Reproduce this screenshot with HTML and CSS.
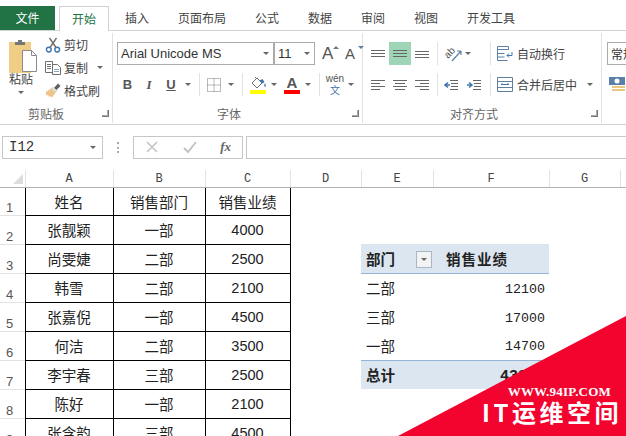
FILE: index.html
```html
<!DOCTYPE html>
<html lang="zh-CN">
<head>
  <meta charset="UTF-8">
  <title>销售业绩</title>
  <link rel="stylesheet" href="styles.css">
</head>
<body>
<div class="app">

  <!-- tabs -->
  <div class="tabs">
    <div class="tab tab-file">文件</div>
    <div class="tab tab-on">开始</div>
    <div class="tab">插入</div>
    <div class="tab">页面布局</div>
    <div class="tab">公式</div>
    <div class="tab">数据</div>
    <div class="tab">审阅</div>
    <div class="tab">视图</div>
    <div class="tab">开发工具</div>
  </div>

  <!-- ribbon -->
  <div class="ribbon">
    <div class="grp grp-clip">
      <div class="grp-body clip-body">
        <div class="paste">
          <svg class="paste-icon" width="29" height="34" viewBox="0 0 29 34">
            <rect x="0" y="3" width="22" height="31" fill="#f0cd84"/>
            <path d="M6 3h3V1h4v2h3v3H6z" fill="#757575"/>
            <path d="M13.500 11.500h9l5 5v16h-14z" fill="#fff" stroke="#8a8a8a"/>
            <path d="M22.500 11.500v5h5" fill="none" stroke="#8a8a8a"/>
          </svg>
          <span class="paste-txt">粘贴</span>
          <i class="caret"></i>
        </div>
        <div class="clip-list">
          <div class="clip-item">
            <svg width="16" height="16" viewBox="0 0 16 16" fill="none" stroke="#3f76ae" stroke-width="1.4">
              <circle cx="3.800" cy="12.600" r="2.400"/><circle cx="12.200" cy="12.600" r="2.400"/>
              <path d="M5 10.500L11.500 1M11 10.500L4.500 1" stroke="#6f6f6f"/>
            </svg>
            <span>剪切</span>
          </div>
          <div class="clip-item">
            <svg width="16" height="14" viewBox="0 0 16 14" fill="none" stroke="#6f6f6f">
              <path d="M.5.5h7v11h-7zM2 3.500h4M2 5.500h4M2 7.500h4"/>
              <path d="M7.500 3.500h5l3 3v7h-8z" fill="#fff"/>
              <path d="M9 8.500h5M9 10.500h5" stroke="#8aa4c0"/>
            </svg>
            <span>复制</span>
            <i class="caret caret-copy"></i>
          </div>
          <div class="clip-item">
            <svg width="16" height="15" viewBox="0 0 16 15">
              <path d="M9 5l4-4.500 2.500 2.500-4 4z" fill="#5f5f5f"/>
              <path d="M1 9l7-5 4 4-5 6.500-2-1.500-1 1-1-2-2 .5z" fill="#efc58b"/>
              <path d="M8 4l4 4-1.500 2-4-4z" fill="#dcdcdc"/>
            </svg>
            <span>格式刷</span>
          </div>
        </div>
      </div>
      <div class="grp-label"><span></span><span>剪贴板</span><i class="launcher"></i></div>
    </div>

    <div class="grp grp-font">
      <div class="grp-body">
        <div class="font-row1">
          <div class="combo combo-name"><span>Arial Unicode MS</span><i class="caret"></i></div>
          <div class="combo combo-size"><span>11</span><i class="caret"></i></div>
          <div class="grow-a">A<i class="tri-up"></i></div>
          <div class="grow-a shrink-a">A<i class="tri-down"></i></div>
        </div>
        <div class="font-row2">
          <b class="fmt">B</b>
          <i class="fmt fmt-i">I</i>
          <u class="fmt">U</u>
          <i class="caret"></i>
          <i class="sep"></i>
          <svg width="14" height="14" viewBox="0 0 14 14" fill="none" stroke="#777" stroke-dasharray="1 1"><path d="M.5.5h13v13H.5zM7 .5v13M.5 7h13"/></svg>
          <i class="caret"></i>
          <i class="sep"></i>
          <div class="color-btn">
            <svg width="17" height="14" viewBox="0 0 17 14" fill="none" stroke="#6f6f6f"><path d="M2 7l5-5 5 5-5 5z" fill="#fff"/><path d="M5 1l2 2"/><path d="M9.500 4.500l3 3 2-1.500-2-3z" fill="#3f76ae" stroke="none"/><path d="M15 7q1.500 3 0 4q-1.500-1 0-4z" fill="#3f76ae" stroke="none"/></svg>
            <i class="bar bar-y"></i>
          </div>
          <i class="caret"></i>
          <div class="color-btn"><span class="color-a">A</span><i class="bar bar-r"></i></div>
          <i class="caret"></i>
          <i class="sep"></i>
          <div class="wen"><span>wén</span><span class="wen-zi">文</span></div>
          <i class="caret"></i>
        </div>
      </div>
      <div class="grp-label"><span></span><span>字体</span><i class="launcher"></i></div>
    </div>

    <div class="grp grp-align">
      <div class="grp-body">
        <div class="align-row1">
          <svg class="lines" width="14" height="8" viewBox="0 0 14 8"><path d="M0 .5h14M0 3.500h14M0 6.500h14"/></svg>
          <div class="align-on"><svg class="lines" width="14" height="8" viewBox="0 0 14 8"><path d="M0 .5h14M0 3.500h14M0 6.500h14"/></svg></div>
          <svg class="lines line-low" width="14" height="8" viewBox="0 0 14 8"><path d="M0 .5h14M0 3.500h14M0 6.500h14"/></svg>
          <i class="sep"></i>
          <svg class="orient" width="18" height="16" viewBox="0 0 18 16" fill="none">
            <text x="1" y="10" transform="rotate(-45 6 8)" class="orient-txt">ab</text>
            <path d="M8 15L17 5M17 5h-4M17 5v4" stroke="#5b7fa6" stroke-width="1.200"/>
          </svg>
          <i class="caret"></i>
          <span></span>
          <i class="sep"></i>
          <svg width="16" height="15" viewBox="0 0 16 15" fill="none" stroke="#5b7fa6"><path d="M.5.5h11v3H.5zM.5 3.500v11h10M.5 7.500h7M.5 11h7"/><path d="M15 6v3.500H10M12 7.500l-2 2 2 2" stroke="#3f76ae"/></svg>
          <span class="align-txt">自动换行</span>
        </div>
        <div class="align-row2">
          <svg class="lines" width="14" height="10" viewBox="0 0 14 10"><path d="M0 .5h14M0 3.500h9M0 6.500h14M0 9.500h9"/></svg>
          <svg class="lines" width="14" height="10" viewBox="0 0 14 10"><path d="M0 .5h14M2 3.500h10M0 6.500h14M2 9.500h10"/></svg>
          <svg class="lines" width="14" height="10" viewBox="0 0 14 10"><path d="M0 .5h14M5 3.500h9M0 6.500h14M5 9.500h9"/></svg>
          <i class="sep"></i>
          <svg width="14" height="10" viewBox="0 0 14 10" fill="none" stroke="#666"><path d="M6 .5h8M7 3.500h7M7 6.500h7M6 9.500h8"/><path d="M6 5H1M4 2.500L1 5l3 2.500" stroke="#3f76ae" stroke-width="1.500"/></svg>
          <svg width="15" height="10" viewBox="0 0 15 10" fill="none" stroke="#666"><path d="M7 .5h8M8 3.500h7M8 6.500h7M7 9.500h8"/><path d="M1 5h5M3 2.500L6 5 3 7.500" stroke="#3f76ae" stroke-width="1.500"/></svg>
          <i class="sep"></i>
          <svg width="16" height="15" viewBox="0 0 16 15" fill="none" stroke="#5f7f9f"><path d="M.5.5h15v14H.5zM.5 4.500h15M.5 10.500h15"/><path d="M4 7.500h8M4 7.500l1.500-1M12 7.500l-1.500-1" stroke="#3f76ae"/></svg>
          <span class="align-txt">合并后居中</span>
          <i class="caret"></i>
        </div>
      </div>
      <div class="grp-label"><span></span><span>对齐方式</span><i class="launcher"></i></div>
    </div>

    <div class="grp grp-num">
      <div class="grp-body">
        <div class="combo combo-num"><span>常规</span></div>
        <svg class="num-icon" width="17" height="17" viewBox="0 0 17 17"><rect y="1" width="16" height="8" fill="#5b7fa6"/><circle cx="8" cy="5" r="2.500" fill="#fff"/><rect x="3" y="10" width="13" height="2" fill="#e8c77e"/><rect x="3" y="13" width="13" height="2" fill="#e8c77e"/></svg>
      </div>
    </div>
  </div>

  <!-- formula bar -->
  <div class="fbar">
    <div class="namebox"><span>I12</span><i class="caret"></i></div>
    <div class="fdots"><i></i></div>
    <div class="fbtns">
      <svg width="14" height="14" viewBox="0 0 14 14" fill="none" stroke="#c4c4c4" stroke-width="1.600"><path d="M2 2l10 10M12 2L2 12"/></svg>
      <svg width="14" height="14" viewBox="0 0 14 14" fill="none" stroke="#c4c4c4" stroke-width="2"><path d="M1 8l4 4 8-10"/></svg>
      <span class="fx">fx</span>
    </div>
    <div class="finput"></div>
  </div>

  <!-- sheet -->
  <div class="sheet">
    <table class="grid">
      <colgroup>
        <col class="c-head"><col class="c-a"><col class="c-b"><col class="c-c"><col class="c-d"><col class="c-e"><col class="c-f"><col class="c-g"><col>
      </colgroup>
      <tr class="col-heads">
        <th class="corner"><i class="corner-tri"></i></th><th>A</th><th>B</th><th>C</th><th>D</th><th>E</th><th>F</th><th>G</th><th></th>
      </tr>
      <tr class="row-first">
        <th class="rn">1</th><td class="d">姓名</td><td class="d">销售部门</td><td class="d">销售业绩</td>
        <td></td><td></td><td></td><td></td><td></td>
      </tr>
      <tr>
        <th class="rn">2</th><td class="d">张靓颖</td><td class="d">一部</td><td class="d">4000</td>
        <td></td><td></td><td></td><td></td><td></td>
      </tr>
      <tr>
        <th class="rn">3</th><td class="d">尚雯婕</td><td class="d">二部</td><td class="d">2500</td>
        <td></td><td class="pv-head"><div class="pv-filter"><span>部门</span><i class="filter-btn"><i class="caret"></i></i></div></td><td class="pv-head pv-title">销售业绩</td><td></td><td></td>
      </tr>
      <tr>
        <th class="rn">4</th><td class="d">韩雪</td><td class="d">二部</td><td class="d">2100</td>
        <td></td><td class="pv-name">二部</td><td class="pv-num">12100</td><td></td><td></td>
      </tr>
      <tr>
        <th class="rn">5</th><td class="d">张嘉倪</td><td class="d">一部</td><td class="d">4500</td>
        <td></td><td class="pv-name">三部</td><td class="pv-num">17000</td><td></td><td></td>
      </tr>
      <tr>
        <th class="rn">6</th><td class="d">何洁</td><td class="d">二部</td><td class="d">3500</td>
        <td></td><td class="pv-name">一部</td><td class="pv-num">14700</td><td></td><td></td>
      </tr>
      <tr>
        <th class="rn">7</th><td class="d">李宇春</td><td class="d">三部</td><td class="d">2500</td>
        <td></td><td class="pv-total">总计</td><td class="pv-total pv-num">43800</td><td></td><td></td>
      </tr>
      <tr>
        <th class="rn">8</th><td class="d">陈好</td><td class="d">一部</td><td class="d">2100</td>
        <td></td><td></td><td></td><td></td><td></td>
      </tr>
      <tr>
        <th class="rn">9</th><td class="d">张含韵</td><td class="d">三部</td><td class="d">4500</td>
        <td></td><td></td><td></td><td></td><td></td>
      </tr>
    </table>

    <!-- site watermark over the corner -->
    <div class="mark">
      <div class="mark-url">WWW.94IP.COM</div>
      <div class="mark-name">IT运维空间</div>
    </div>
  </div>

</div>
</body>
</html>
```

FILE: styles.css
```css
html, body {
  margin: 0;
  height: 100%;
  overflow: hidden;
  background: #fff;
}
.app {
  width: 626px;
  height: 436px;
  overflow: hidden;
  font-family: "Noto Sans CJK SC", "Liberation Sans", sans-serif;
  font-size: 12px;
  color: #444;
}

/* tabs */
.tabs {
  display: flex;
  align-items: flex-end;
  height: 31px;
  box-sizing: border-box;
  border-bottom: 1px solid #d2d2d2;
}
.tab {
  height: 24px;
  line-height: 23px;
  padding: 0 14.5px;
  white-space: nowrap;
  color: #444;
}
.tab-file {
  width: 55px;
  box-sizing: border-box;
  padding: 0;
  text-align: center;
  background: #217346;
  color: #fff;
  margin-right: 4px;
}
.tab-on {
  width: 50px;
  height: 25px;
  box-sizing: border-box;
  padding: 0;
  text-align: center;
  color: #217346;
  background: #fff;
  border: 1px solid #d2d2d2;
  border-bottom: none;
  margin-right: 1.5px;
  margin-bottom: -1px;
}

/* ribbon */
.ribbon {
  display: flex;
  height: 94px;
  box-sizing: border-box;
  border-bottom: 1px solid #d2d2d2;
}
.grp {
  flex: none;
  display: flex;
  flex-direction: column;
  box-sizing: border-box;
  height: 90px;
  margin-top: 2px;
  border-right: 1px solid #e1e1e1;
}
.grp-clip { width: 113px; }
.grp-font { width: 250px; padding-left: 4px; }
.grp-align { width: 239px; padding-left: 4px; }
.grp-num { width: 24px; padding-left: 5px; border-right: none; }
.grp-body {
  flex: 1;
  min-height: 0;
  padding-top: 9px;
}
.grp-label {
  display: grid;
  align-items: center;
  height: 19px;
  line-height: 19px;
  color: #666;
}
.grp-clip .grp-label { grid-template-columns: 28px auto 1fr; }
.grp-font .grp-label { grid-template-columns: 100px auto 1fr; }
.grp-align .grp-label { grid-template-columns: 83px auto 1fr; }
.launcher {
  justify-self: end;
  width: 6px;
  height: 6px;
  margin-right: 3px;
  border-right: 1px solid #777;
  border-bottom: 1px solid #777;
  box-shadow: inset -2px -2px 0 -1px #aaa;
}
.caret {
  display: block;
  width: 0;
  height: 0;
  border-left: 3px solid transparent;
  border-right: 3px solid transparent;
  border-top: 3px solid #666;
}
.sep {
  display: block;
  width: 1px;
  height: 23px;
  background: #e1e1e1;
}

/* clipboard */
.clip-body {
  display: flex;
  padding-top: 6px;
}
.paste {
  display: flex;
  flex-direction: column;
  align-items: center;
  width: 26px;
  margin-left: 8px;
}
.paste-icon {
  flex: none;
  align-self: flex-start;
  margin-left: 1px;
}
.paste-txt {
  line-height: 14px;
  margin-top: -1px;
}
.paste .caret { margin-top: 5px; }
.clip-list {
  display: flex;
  flex-direction: column;
  margin-left: 11px;
  margin-top: -6px;
}
.clip-item {
  display: flex;
  align-items: center;
  gap: 3px;
  height: 23px;
}
.clip-item svg { width: 16px; flex: none; }
.caret-copy { margin-left: 6px; }

/* font */
.font-row1 {
  display: flex;
  align-items: center;
  height: 23px;
}
.combo {
  display: flex;
  align-items: center;
  justify-content: space-between;
  box-sizing: border-box;
  height: 23px;
  padding: 0 4px 0 3px;
  border: 1px solid #ababab;
  background: #fff;
  font-family: "Liberation Sans", "Noto Sans CJK SC", sans-serif;
  font-size: 13px;
  color: #333;
  white-space: nowrap;
}
.combo-name { width: 157px; }
.combo-size { width: 41px; }
.grow-a {
  position: relative;
  width: 14px;
  margin-left: 7px;
  font: 17px "Liberation Sans", sans-serif;
  color: #555;
  line-height: 23px;
}
.shrink-a {
  margin-left: 9px;
  font-size: 15px;
}
.tri-up, .tri-down {
  position: absolute;
  right: -3px;
  top: 4px;
  width: 0;
  height: 0;
  border-left: 3px solid transparent;
  border-right: 3px solid transparent;
  border-bottom: 3px solid #777;
}
.tri-down {
  right: -5px;
  border-bottom: none;
  border-top: 3px solid #5b7fa6;
}
.font-row2 {
  display: grid;
  grid-template-columns: 21px 22px 22px 12px 10px 20px 14px 8px 24px 8px 28px 4px 18px 14px 18px;
  place-items: center;
  height: 23px;
  margin-top: 8px;
}
.fmt {
  font: bold 13px "Liberation Sans", sans-serif;
  color: #555;
}
.fmt-i {
  font-family: "Liberation Serif", serif;
  font-style: italic;
}
.color-btn {
  display: flex;
  flex-direction: column;
  align-items: center;
}
.bar {
  display: block;
  width: 16px;
  height: 4px;
}
.bar-y { background: #ffff00; }
.bar-r { background: #f00; }
.color-a {
  font: bold 15px/14px "Liberation Sans", sans-serif;
  color: #555;
}
.wen {
  display: flex;
  flex-direction: column;
  align-items: center;
  font: 10px/10px "Liberation Sans", sans-serif;
  color: #555;
}
.wen-zi {
  margin-top: 1px;
  font-family: "Noto Sans CJK SC", sans-serif;
  font-size: 10px;
  line-height: 10px;
  color: #3f76ae;
}

/* alignment */
.lines {
  fill: none;
  stroke: #666;
}
.line-low { margin-top: 3px; }
.orient { overflow: visible; }
.orient-txt {
  font: 10px "Liberation Sans", sans-serif;
  fill: #555;
}
.align-row1, .align-row2 {
  display: grid;
  place-items: center;
  height: 23px;
}
.align-row1 { grid-template-columns: 22px 22px 22px 8px 24px 6px 15px 8px 22px 70px; }
.align-row2 {
  grid-template-columns: 22px 22px 22px 8px 20px 25px 8px 22px 61px 26px;
  margin-top: 8px;
}
.align-on {
  display: flex;
  align-items: center;
  justify-content: center;
  width: 22px;
  height: 23px;
  background: #9fd5b7;
}
.align-txt {
  justify-self: start;
  padding-left: 1px;
  white-space: nowrap;
}

/* number */
.combo-num {
  width: 30px;
  padding-left: 3px;
  font-size: 12px;
}
.num-icon {
  display: block;
  margin: 11px 0 0 2px;
}

/* formula bar */
.fbar {
  display: flex;
  align-items: center;
  height: 45px;
  box-sizing: border-box;
  padding: 0 0 1px 2px;
  background: #fff;
}
.namebox {
  display: flex;
  align-items: center;
  justify-content: space-between;
  box-sizing: border-box;
  width: 101px;
  height: 23px;
  padding: 0 6px;
  background: #fff;
  border: 1px solid #c6c6c6;
  font: 14px "Liberation Mono", monospace;
  color: #333;
}
.fdots {
  display: flex;
  justify-content: center;
  width: 30px;
}
.fdots i {
  display: block;
  height: 11px;
  border-left: 2px dotted #aaa;
}
.fbtns {
  display: flex;
  align-items: center;
  justify-content: space-between;
  box-sizing: border-box;
  width: 110px;
  height: 23px;
  padding: 0 11px;
  background: #fff;
  border: 1px solid #c6c6c6;
}
.fx {
  font: italic bold 13px "Liberation Serif", serif;
  color: #666;
}
.finput {
  flex: 1;
  height: 23px;
  margin-left: 3px;
  box-sizing: border-box;
  background: #fff;
  border: 1px solid #c6c6c6;
  border-right: none;
}

/* sheet */
.sheet {
  position: relative;
  height: 266px;
  overflow: hidden;
}
.grid {
  table-layout: fixed;
  width: 660px;
  border-collapse: collapse;
  font-size: 14.5px;
  color: #222;
}
.c-head { width: 25px; }
.c-a { width: 88px; }
.c-b { width: 92px; }
.c-c { width: 85px; }
.c-d { width: 71px; }
.c-e { width: 72px; }
.c-f { width: 116px; }
.c-g { width: 71px; }
.grid tr { height: 29px; }
.grid .row-first { height: 28px; }
.grid td {
  padding: 0;
  white-space: nowrap;
}
.grid .col-heads { height: 17px; }
.col-heads th {
  height: 17px;
  padding: 2px 0 0;
  box-sizing: border-box;
  font: 12px/13px "Liberation Mono", monospace;
  color: #444;
  background: #fff;
  border-right: 1px solid #e2e2e2;
  border-bottom: 1px solid #b4b4b4;
}
.corner-tri {
  display: block;
  width: 0;
  height: 0;
  margin: 0 2px 0 auto;
  border-left: 10px solid transparent;
  border-bottom: 10px solid #dcdcdc;
}
.rn {
  padding: 0 0 0 6px;
  text-align: left;
  vertical-align: bottom;
  font: 13px/15px "Liberation Sans", sans-serif;
  color: #555;
  border-top: 1px solid #e2e2e2;
}
.d {
  text-align: center;
  font-family: "Liberation Sans", "Noto Sans CJK SC", sans-serif;
  border: 1px solid #000;
}
.pv-head {
  background: #dce6f1;
  border-bottom: 1px solid #95b3d7;
  font-weight: bold;
}
.pv-filter {
  display: flex;
  align-items: center;
  justify-content: space-between;
  padding: 0 1px 0 5px;
}
.filter-btn {
  display: flex;
  align-items: center;
  justify-content: center;
  box-sizing: border-box;
  width: 16px;
  height: 17px;
  margin-top: 3px;
  background: #f3f3f3;
  border: 1px solid #a9b8c9;
}
.pv-title {
  padding-left: 13px !important;
  letter-spacing: 1px;
}
.pv-name { padding-left: 5px !important; }
.pv-num {
  padding: 3px 4px 0 0 !important;
  text-align: right;
  font: 13.3px "Liberation Mono", monospace;
}
.pv-total {
  padding-left: 5px !important;
  background: #dce6f1;
  border-top: 1px solid #95b3d7;
  font-weight: bold;
}
.pv-total.pv-num { font: bold 15px "Liberation Mono", monospace; }

/* watermark */
.mark {
  position: absolute;
  right: 0;
  bottom: 0;
  width: 228px;
  height: 120px;
  background: #f2042f;
  clip-path: polygon(0 100%, 100% 0, 100% 100%);
  color: #fff;
  text-align: right;
}
.mark-url {
  margin-top: 68px;
  padding-right: 15px;
  font: bold 13px/15px "Liberation Serif", serif;
  letter-spacing: .2px;
}
.mark-name {
  padding-right: 4px;
  font: bold 24px/26px "Noto Sans CJK SC", sans-serif;
  letter-spacing: 3.5px;
}
```
